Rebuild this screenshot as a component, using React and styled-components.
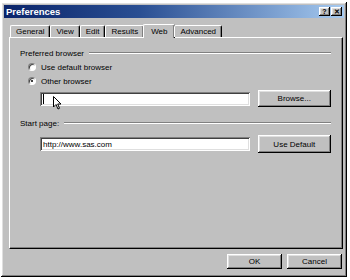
import React from "react";
import styled, { createGlobalStyle } from "styled-components";

const Global = createGlobalStyle`
  html, body { margin: 0; padding: 0; background: #ffffff; }
  body { font-family: "Liberation Sans", Arial, sans-serif; }
`;

const raised = `
  box-shadow: inset -1px -1px #000, inset 1px 1px #fff, inset -2px -2px #808080, inset 2px 2px #dfdfdf;
`;

const Window = styled.div`
  position: relative;
  margin: 2px 0 0 1px;
  width: 346px;
  height: 275px;
  box-sizing: border-box;
  background: #c0c0c0;
  padding: 3px;
  ${raised}
  display: flex;
  flex-direction: column;
  font-size: 8px;
  color: #000;
`;

const TitleBar = styled.div`
  height: 13px;
  display: flex;
  align-items: center;
  padding: 0 2px 0 2px;
  background: linear-gradient(to right, #0a246a 0%, #2a4f93 40%, #a6caf0 100%);
`;

const Title = styled.div`
  flex: 1;
  color: #fff;
  font-weight: bold;
  font-size: 9.5px;
`;

const TitleButton = styled.div`
  width: 11px;
  height: 9px;
  margin-left: ${(p) => (p.$gap ? "1px" : "0")};
  background: #c0c0c0;
  ${raised}
  display: flex;
  align-items: center;
  justify-content: center;
  font-weight: bold;
  font-size: 7px;
  line-height: 1;
`;

const Body = styled.div`
  flex: 1;
  display: flex;
  flex-direction: column;
  padding: 5px 1px 0 5px;
`;

const TabRow = styled.div`
  display: flex;
  align-items: flex-end;
  height: 14px;
  padding-left: 1px;
  position: relative;
  z-index: 1;
`;

const Tab = styled.div`
  height: ${(p) => (p.$active ? "14px" : "12px")};
  margin: ${(p) => (p.$active ? "0 -1px -1px -1px" : "0")};
  padding: 0 ${(p) => (p.$active ? "7px" : "5px")};
  box-sizing: border-box;
  display: flex;
  align-items: center;
  background: #c0c0c0;
  border-top: 1px solid #fff;
  border-left: 1px solid #fff;
  border-right: 1px solid #000;
  box-shadow: inset -1px 0 #808080;
  border-radius: 2px 2px 0 0;
  white-space: nowrap;
`;

const Panel = styled.div`
  height: 212px;
  box-sizing: border-box;
  border-top: 1px solid #fff;
  border-left: 1px solid #fff;
  border-right: 1px solid #000;
  border-bottom: 1px solid #000;
  box-shadow: inset -1px -1px #808080;
  padding: 10px 11px 0 10px;
  display: flex;
  flex-direction: column;
`;

const GroupHeader = styled.div`
  display: flex;
  align-items: center;
  height: 10px;
  margin-top: ${(p) => p.$mt || 0}px;
`;

const GroupRule = styled.div`
  flex: 1;
  margin-left: 5px;
  border-top: 1px solid #808080;
  border-bottom: 1px solid #fff;
`;

const RadioRow = styled.div`
  display: flex;
  align-items: center;
  height: 14px;
  padding-left: 8px;
  gap: 5px;
  margin-top: ${(p) => p.$mt || 0}px;
`;

const Radio = styled.span`
  width: 8px;
  height: 8px;
  box-sizing: border-box;
  border-radius: 50%;
  background: #fff;
  border: 1px solid;
  border-color: #808080 #fff #fff #808080;
  box-shadow: inset 1px 1px #404040;
  display: flex;
  align-items: center;
  justify-content: center;
  &::after {
    content: "";
    width: 2px;
    height: 2px;
    border-radius: 50%;
    background: #000;
    display: ${(p) => (p.$checked ? "block" : "none")};
  }
`;

const FieldRow = styled.div`
  display: flex;
  align-items: center;
  padding-left: 20px;
  margin-top: ${(p) => p.$mt || 0}px;
  gap: 8px;
  position: relative;
`;

const Field = styled.div`
  width: 211px;
  height: 14px;
  box-sizing: border-box;
  background: #fff;
  box-shadow: inset 1px 1px #808080, inset -1px -1px #fff, inset 2px 2px #404040, inset -2px -2px #dfdfdf;
  display: flex;
  align-items: center;
  padding-left: 3px;
  font-size: 8px;
`;

const Caret = styled.span`
  width: 1px;
  height: 10px;
  background: #000;
`;

const Button = styled.div`
  width: ${(p) => p.$w || 74}px;
  height: ${(p) => p.$h || 17}px;
  box-sizing: border-box;
  background: #c0c0c0;
  ${raised}
  display: flex;
  align-items: center;
  justify-content: center;
  font-size: 8px;
`;

const Footer = styled.div`
  display: flex;
  justify-content: flex-end;
  gap: 5px;
  padding: 5px 1px 0 0;
`;

const Pointer = styled.svg`
  position: absolute;
  left: 33px;
  top: 6px;
`;

export default function App() {
  return (
    <>
      <Global />
      <Window>
        <TitleBar>
          <Title>Preferences</Title>
          <TitleButton>?</TitleButton>
          <TitleButton $gap>✕</TitleButton>
        </TitleBar>
        <Body>
          <TabRow>
            <Tab>General</Tab>
            <Tab>View</Tab>
            <Tab>Edit</Tab>
            <Tab>Results</Tab>
            <Tab $active>Web</Tab>
            <Tab>Advanced</Tab>
          </TabRow>
          <Panel>
            <GroupHeader>
              Preferred browser
              <GroupRule />
            </GroupHeader>
            <RadioRow $mt={2}>
              <Radio />
              Use default browser
            </RadioRow>
            <RadioRow>
              <Radio $checked />
              Other browser
            </RadioRow>
            <FieldRow $mt={2}>
              <Field>
                <Caret />
              </Field>
              <Button>Browse...</Button>
              <Pointer width="10" height="14" viewBox="0 0 10 14">
                <path d="M0.5 0.5 L0.5 11 L3 8.5 L5 13 L6.5 12.3 L4.7 8 L8 8 Z" fill="#fff" stroke="#000" strokeWidth="1" strokeLinejoin="miter" />
              </Pointer>
            </FieldRow>
            <GroupHeader $mt={11}>
              Start page:
              <GroupRule />
            </GroupHeader>
            <FieldRow $mt={7}>
              <Field>http://www.sas.com</Field>
              <Button $h={18}>Use Default</Button>
            </FieldRow>
          </Panel>
          <Footer>
            <Button $w={55} $h={15}>OK</Button>
            <Button $w={55} $h={15}>Cancel</Button>
          </Footer>
        </Body>
      </Window>
    </>
  );
}
